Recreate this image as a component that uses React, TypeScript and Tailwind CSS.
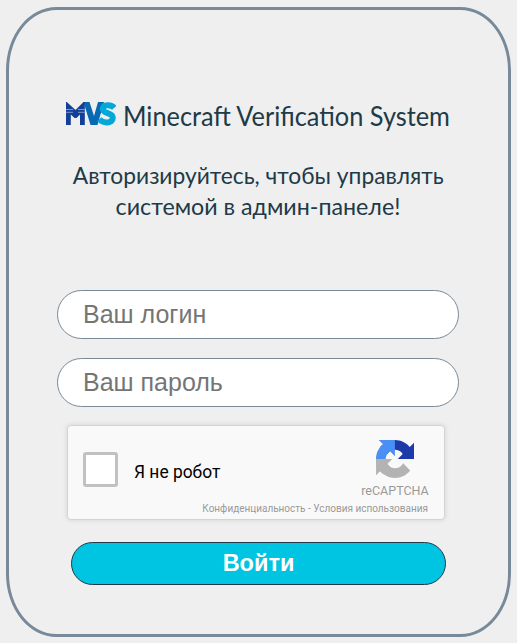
import React from "react";

function MvsLogo() {
  return (
    <svg width="50" height="24" viewBox="0 0 50 24" className="shrink-0" aria-label="MVS">
      <path d="M17.5 0H23.5L28 14L32 0H38L31.5 23H24.5Z" fill="#0869b3" />
      <path d="M0 0H.8L9.5 8L17.5 0H18.8V23H14V12.5L10.5 16H8.5L4.8 12.5V23H0Z" fill="#123f97" />
      <path d="M48.3 5.8C45 2.2 36.8 2 36.8 7C36.8 12.2 46.8 10.2 46.8 15.8C46.8 21.6 37.5 21.8 33.3 17.3" fill="none" stroke="#04a8d8" strokeWidth="6" />
      <path d="M0 7.5H7M12 7.5H18.8M0 10.3H7M12 10.3H18.8" fill="none" stroke="#a9bbdc" strokeWidth=".7" />
    </svg>
  );
}

function RecaptchaMark() {
  return (
    <svg width="38" height="38" viewBox="0 0 64 64" className="shrink-0">
      <path d="M64 31.955l-.016-1.37V4.687l-7.16 7.16C50.965 4.674 42.033.093 32.03.093c-10.4 0-19.635 4.96-25.458 12.64l11.736 11.86a15.55 15.55 0 0 1 4.754-5.334c2.05-1.6 4.952-2.906 8.968-2.906.485 0 .86.057 1.135.163 4.976.393 9.288 3.14 11.828 7.124l-8.307 8.307L64 31.953" fill="#1c3aa9" />
      <path d="M31.862.094l-1.37.016H4.594l7.16 7.16C4.58 13.147 0 22.08 0 32.046c0 10.4 4.96 19.635 12.64 25.458L24.5 45.77a15.55 15.55 0 0 1-5.334-4.754c-1.6-2.05-2.906-4.952-2.906-8.968 0-.485.057-.86.163-1.135.393-4.976 3.14-9.288 7.124-11.828l8.307 8.307L31.86.094" fill="#4a8ff5" />
      <path d="M.093 31.955l.016 1.37v25.9l7.16-7.16c5.876 7.18 14.8 11.76 24.776 11.76 10.4 0 19.635-4.96 25.458-12.64l-11.736-11.86a15.55 15.55 0 0 1-4.754 5.334c-2.05 1.6-4.952 2.906-8.968 2.906-.485 0-.86-.057-1.135-.163-4.976-.393-9.288-3.14-11.828-7.124l8.307-8.307L.094 31.955" fill="#b3b3b3" />
    </svg>
  );
}

export default function App() {
  return (
    <main className="h-[643px] w-[517px] bg-[#efefef] pt-[7px] pl-[6px] font-['Liberation_Sans',sans-serif]">
      <section className="flex h-[630px] w-[505px] flex-col rounded-[10%] border-[3px] border-[#788999] pt-[90px]">
        <header className="ml-[57px] flex h-[32px] items-center font-['Lato',sans-serif] text-[#203a48]">
          <div className="pb-[4px]"><MvsLogo /></div>
          <h1 className="ml-[7px] origin-left scale-x-[0.974] text-[26px] leading-[32px] whitespace-nowrap">Minecraft Verification System</h1>
        </header>
        <p className="mt-[28px] h-[62px] text-center font-['Lato',sans-serif] text-[23px] leading-[31px] text-[#203a48]">
          <span className="inline-block origin-center scale-x-[0.99]">Авторизируйтесь, чтобы управлять</span><br />
          <span className="inline-block origin-center scale-x-[1.01]">системой в админ-панеле!</span>
        </p>
        <form className="mt-[68px] flex flex-col" onSubmit={(e) => e.preventDefault()}>
          <input placeholder="Ваш логин" className="ml-[48px] h-[49px] w-[402px] rounded-full border border-[#788999] bg-white px-[25px] text-[25px] placeholder:text-[#757575]" />
          <input type="password" placeholder="Ваш пароль" className="mt-[19px] ml-[48px] h-[49px] w-[402px] rounded-full border border-[#788999] bg-white px-[25px] text-[25px] placeholder:text-[#757575]" />
          <div className="mt-[18px] ml-[58px] h-[95px] w-[378px] rounded-[4px] border border-[#d3d3d3] bg-[#f9f9f9] font-['Roboto',sans-serif] shadow-[0_0_4px_1px_rgba(0,0,0,0.08)]">
            <div className="flex h-[72px] justify-between">
              <label className="flex items-start pt-[26px] pl-[15px]">
                <span className="h-[35px] w-[35px] rounded-[3px] border-[3px] border-[#c1c1c1] bg-white" />
                <span className="ml-[16px] origin-left scale-x-[0.965] pt-[9px] text-[18px] leading-[22px] text-black">Я не робот</span>
              </label>
              <div className="mr-[15px] flex w-[68px] flex-col items-center pt-[14px]">
                <RecaptchaMark />
                <span className="mt-[6px] text-[12.5px] leading-[14px] text-[#999]">reCAPTCHA</span>
              </div>
            </div>
            <div className="pt-[4px] pr-[16px] text-right text-[10px] leading-[13px] text-[#999]">Конфиденциальность - Условия использования</div>
          </div>
          <button className="mt-[22px] ml-[62px] h-[43px] w-[375px] rounded-full border border-[#203a48] bg-[#00c5e2] pb-[2px] text-[23.5px] font-bold leading-[38px] text-white">Войти</button>
        </form>
      </section>
    </main>
  );
}
